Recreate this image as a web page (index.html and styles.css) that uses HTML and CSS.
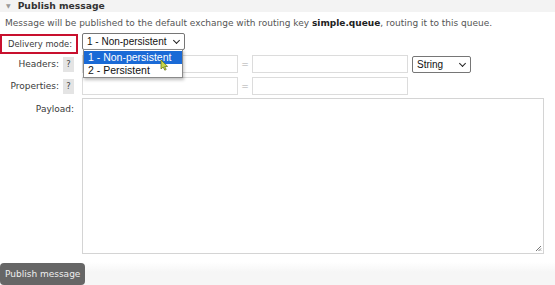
FILE: index.html
```html
<!DOCTYPE html>
<html>
<head>
<meta charset="utf-8">
<link rel="stylesheet" href="styles.css">
</head>
<body>
<div class="section-head"><span class="tri">&#9660;</span>Publish message</div>
<div class="section-body">
  <p class="note">Message will be published to the default exchange with routing key <b>simple.queue</b>, routing it to this queue.</p>
  <div class="form">
    <div class="row row-mode">
      <div class="label"><span class="mark">Delivery mode:</span></div>
      <div class="field">
        <div class="select sel-mode">1 - Non-persistent<span class="chev"></span></div>
        <ul class="dropdown">
          <li class="active">1 - Non-persistent</li>
          <li>2 - Persistent</li>
        </ul>
        <svg class="cursor" width="9" height="12" viewBox="0 0 9 12"><path d="M1 1 L1 10 L3.2 8 L4.8 11.2 L6.2 10.5 L4.7 7.5 L7.6 7.4 Z" fill="#c8d84a" stroke="#6a7a18" stroke-width="0.8"/></svg>
      </div>
    </div>
    <div class="row row-kv">
      <div class="label">Headers:<span class="help">?</span></div>
      <div class="field">
        <span class="input w156"></span><span class="eq">=</span><span class="input w156"></span>
        <div class="select sel-type">String<span class="chev"></span></div>
      </div>
    </div>
    <div class="row row-kv">
      <div class="label">Properties:<span class="help">?</span></div>
      <div class="field">
        <span class="input w156"></span><span class="eq">=</span><span class="input w156"></span>
      </div>
    </div>
    <div class="row row-payload">
      <div class="label lbl-top">Payload:</div>
      <div class="field"><div class="textarea"><svg class="grip" width="7" height="7" viewBox="0 0 7 7"><path d="M6 1 L1 6 M6 3.5 L3.5 6 M6 5.5 L5.5 6" stroke="#777" stroke-width="1"/></svg></div></div>
    </div>
  </div>
</div>
<div class="footer"><span class="btn">Publish message</span></div>
</body>
</html>
```
FILE: styles.css
```css
html, body { margin: 0; padding: 0; }
body {
  width: 555px;
  height: 285px;
  overflow: hidden;
  background: #fff;
  font-family: "DejaVu Sans", Verdana, sans-serif;
  font-size: 9px;
  color: #444;
}
.section-head {
  height: 12px;
  background: #f3f3f3;
  font-weight: bold;
  font-size: 9.2px;
  line-height: 12px;
  color: #333;
  padding-left: 6px;
  margin-top: -3px;
  padding-top: 3px;
  box-sizing: content-box;
}
.tri { color: #999; font-size: 6px; margin-right: 7px; vertical-align: 1px; }
.note { margin: 0; padding: 5px 0 0 5px; line-height: 12px; color: #555; font-size: 9px; }
.note b { color: #222; }
.form { display: flex; flex-direction: column; margin-top: 3px; }
.row { display: flex; align-items: flex-start; }
.row-mode { height: 23px; }
.row-kv { height: 18px; margin-bottom: 4px; }
.label {
  width: 74px;
  height: 100%;
  display: flex;
  justify-content: flex-end;
  align-items: center;
  margin-right: 8px;
  white-space: nowrap;
  color: #3a3a3a;
}
.row-mode .label { align-items: flex-start; }
.mark {
  border: 2px solid #c8102e;
  padding: 2px 4px 2px 4px;
  margin: 2px -4px 0 -1px;
  width: 78px;
  box-sizing: border-box;
  line-height: 12px;
  font-size: 8.4px;
  text-align: right;
}
.help {
  display: inline-block;
  width: 11px;
  height: 15px;
  line-height: 15px;
  text-align: center;
  background: #e4e4e4;
  color: #444;
  margin-left: 4px;
  font-size: 8.4px;
}
.field { position: relative; display: flex; align-items: center; }
.select {
  position: relative;
  box-sizing: border-box;
  height: 17px;
  border: 1px solid #767676;
  border-radius: 2px;
  background: #fff;
  font-family: "Liberation Sans", Arial, sans-serif;
  font-size: 10px;
  color: #111;
  line-height: 15px;
  padding-left: 4px;
}
.sel-mode { width: 103px; margin-top: 1px; }
.sel-type { width: 59px; margin-left: 4px; }
.chev {
  position: absolute;
  right: 5px;
  top: 4px;
  width: 4px;
  height: 4px;
  border-right: 1.5px solid #222;
  border-bottom: 1.5px solid #222;
  transform: rotate(45deg);
}
.dropdown {
  position: absolute;
  left: 1px;
  top: 17px;
  margin: 0;
  padding: 1px 0;
  list-style: none;
  width: 100px;
  box-sizing: border-box;
  background: #fff;
  border: 1px solid #8a8a8a;
  box-shadow: 1px 2px 3px rgba(0,0,0,0.25);
  font-family: "Liberation Sans", Arial, sans-serif;
  font-size: 10.5px;
  color: #111;
  z-index: 2;
}
.dropdown li { height: 12.5px; line-height: 12.5px; padding-left: 4px; }
.dropdown li.active { background: #1a6ad6; color: #fff; }
.cursor { position: absolute; left: 78px; top: 27px; z-index: 3; }
.input {
  display: inline-block;
  box-sizing: border-box;
  height: 18px;
  border: 1px solid #dcdcdc;
  background: #fff;
}
.w156 { width: 156px; }
.eq { width: 14px; text-align: center; color: #aaa; }
.row-payload { margin-top: -1px; }
.lbl-top { height: auto; padding-top: 6px; }
.textarea {
  position: relative;
  width: 462px;
  height: 156px;
  box-sizing: border-box;
  border: 1px solid #d4d4d4;
  background: #fff;
}
.grip { position: absolute; right: 1px; bottom: 1px; }
.footer {
  margin-top: 8px;
  height: 30px;
  background: linear-gradient(#fff 0, #f6f6f6 10px);
}
.btn {
  display: inline-block;
  margin-top: 1px;
  background: #666;
  color: #eee;
  height: 22px;
  line-height: 22px;
  padding: 0 5px;
  border-radius: 4px;
  font-size: 9px;
}
```
